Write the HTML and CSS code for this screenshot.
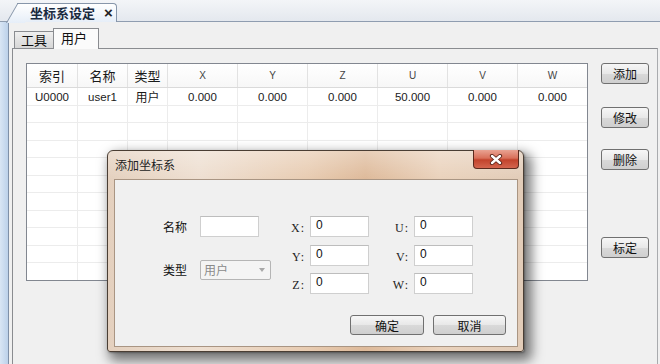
FILE: index.html
```html
<!DOCTYPE html>
<html>
<head>
<meta charset="utf-8">
<link rel="stylesheet" href="styles.css">
</head>
<body>
<div class="app">
  <div class="doctabs">
    <div class="doctab"><span class="doctab-title">坐标系设定</span><span class="doctab-close">×</span></div>
  </div>
  <div class="frame">
    <div class="rail"></div>
    <div class="work">
      <div class="subtabs">
        <div class="subtab">工具</div>
        <div class="subtab active">用户</div>
      </div>
      <div class="panel">
        <div class="grid">
          <div class="grow head">
            <div class="cell cjk">索引</div><div class="cell cjk">名称</div><div class="cell cjk">类型</div>
            <div class="cell ax">X</div><div class="cell ax">Y</div><div class="cell ax">Z</div>
            <div class="cell ax">U</div><div class="cell ax">V</div><div class="cell ax">W</div>
          </div>
          <div class="grow">
            <div class="cell">U0000</div><div class="cell">user1</div><div class="cell cjk">用户</div>
            <div class="cell">0.000</div><div class="cell">0.000</div><div class="cell">0.000</div>
            <div class="cell">50.000</div><div class="cell">0.000</div><div class="cell">0.000</div>
          </div>
          <div class="grow"><div class="cell"></div><div class="cell"></div><div class="cell"></div><div class="cell"></div><div class="cell"></div><div class="cell"></div><div class="cell"></div><div class="cell"></div><div class="cell"></div></div>
          <div class="grow"><div class="cell"></div><div class="cell"></div><div class="cell"></div><div class="cell"></div><div class="cell"></div><div class="cell"></div><div class="cell"></div><div class="cell"></div><div class="cell"></div></div>
          <div class="grow"><div class="cell"></div><div class="cell"></div><div class="cell"></div><div class="cell"></div><div class="cell"></div><div class="cell"></div><div class="cell"></div><div class="cell"></div><div class="cell"></div></div>
          <div class="grow"><div class="cell"></div><div class="cell"></div><div class="cell"></div><div class="cell"></div><div class="cell"></div><div class="cell"></div><div class="cell"></div><div class="cell"></div><div class="cell"></div></div>
          <div class="grow"><div class="cell"></div><div class="cell"></div><div class="cell"></div><div class="cell"></div><div class="cell"></div><div class="cell"></div><div class="cell"></div><div class="cell"></div><div class="cell"></div></div>
          <div class="grow"><div class="cell"></div><div class="cell"></div><div class="cell"></div><div class="cell"></div><div class="cell"></div><div class="cell"></div><div class="cell"></div><div class="cell"></div><div class="cell"></div></div>
          <div class="grow"><div class="cell"></div><div class="cell"></div><div class="cell"></div><div class="cell"></div><div class="cell"></div><div class="cell"></div><div class="cell"></div><div class="cell"></div><div class="cell"></div></div>
          <div class="grow"><div class="cell"></div><div class="cell"></div><div class="cell"></div><div class="cell"></div><div class="cell"></div><div class="cell"></div><div class="cell"></div><div class="cell"></div><div class="cell"></div></div>
          <div class="grow"><div class="cell"></div><div class="cell"></div><div class="cell"></div><div class="cell"></div><div class="cell"></div><div class="cell"></div><div class="cell"></div><div class="cell"></div><div class="cell"></div></div>
          <div class="grow"><div class="cell"></div><div class="cell"></div><div class="cell"></div><div class="cell"></div><div class="cell"></div><div class="cell"></div><div class="cell"></div><div class="cell"></div><div class="cell"></div></div>
        </div>
        <div class="actions">
          <button class="btn b-add">添加</button>
          <button class="btn b-edit">修改</button>
          <button class="btn b-del">删除</button>
          <button class="btn b-cal">标定</button>
        </div>
      </div>
    </div>
  </div>

  <div class="dialog">
    <div class="dlg-title">添加坐标系</div>
    <div class="dlg-close">
      <svg width="14" height="11" viewBox="0 0 14 11">
        <path d="M3 2 L11 9 M11 2 L3 9" stroke="#5a2418" stroke-width="4.2" stroke-linecap="round"/>
        <path d="M3 2 L11 9 M11 2 L3 9" stroke="#ffffff" stroke-width="2.4" stroke-linecap="round"/>
      </svg>
    </div>
    <div class="dlg-client">
      <div class="fields">
        <div class="col-basic">
          <div class="frow"><span class="flabel">名称</span><div class="input"></div></div>
          <div class="frow type"><span class="flabel">类型</span><div class="select"><span>用户</span><span class="arrow"></span></div></div>
        </div>
        <div class="col-axis">
          <div class="arow"><span class="alabel">X:</span><div class="input">0</div></div>
          <div class="arow"><span class="alabel">Y:</span><div class="input">0</div></div>
          <div class="arow"><span class="alabel">Z:</span><div class="input">0</div></div>
        </div>
        <div class="col-axis col-right">
          <div class="arow"><span class="alabel">U:</span><div class="input">0</div></div>
          <div class="arow"><span class="alabel">V:</span><div class="input">0</div></div>
          <div class="arow"><span class="alabel">W:</span><div class="input">0</div></div>
        </div>
      </div>
      <div class="dlg-foot">
        <button class="btn b-ok">确定</button>
        <button class="btn b-cancel">取消</button>
      </div>
    </div>
  </div>
</div>
</body>
</html>
```
FILE: styles.css
```css
* { box-sizing: border-box; }
html, body { margin: 0; padding: 0; }
body {
  width: 660px;
  height: 364px;
  overflow: hidden;
  background: #f0f0f0;
  font-family: "Noto Sans CJK SC", sans-serif;
  font-size: 12px;
  color: #111;
}
.app {
  position: relative;
  width: 660px;
  height: 364px;
  overflow: hidden;
  background: #f0f0f0;
}

/* document tab strip */
.doctabs {
  height: 22px;
  display: flex;
  align-items: flex-end;
  padding-left: 17px;
  background: linear-gradient(#f3f5f8, #e4e8ee);
  border-bottom: 1px solid #8f9db0;
}
.doctab {
  position: relative;
  height: 19px;
  width: 100px;
  margin-bottom: -1px;
  display: flex;
  align-items: center;
  padding-left: 13px;
  border: 1px solid #8796aa;
  border-left: none;
  border-bottom: none;
  border-top-right-radius: 4px;
  background: linear-gradient(#ffffff, #e6eef8);
}
.doctab::before {
  content: "";
  position: absolute;
  left: -11px;
  top: -1px;
  width: 18px;
  height: 19px;
  border-left: 1px solid #8796aa;
  border-top: 1px solid #8796aa;
  background: linear-gradient(#ffffff, #e6eef8);
  transform: skewX(-30deg);
  transform-origin: bottom left;
}
.doctab-title {
  position: relative;
  font-weight: bold;
  font-size: 13px;
  line-height: 16px;
  color: #1a2a40;
}
.doctab-close {
  position: relative;
  margin-left: 9px;
  font-family: "Liberation Sans", sans-serif;
  font-weight: bold;
  font-size: 15px;
  line-height: 16px;
  color: #222;
}

/* frame */
.frame {
  display: flex;
  height: 342px;
}
.rail {
  width: 9px;
  background: linear-gradient(90deg, #d9e6f5, #bcd1ea);
  border-right: 1px solid #7f90a8;
}
.work {
  flex: 1;
  display: flex;
  flex-direction: column;
  padding-left: 3px;
  padding-right: 2px;
  background: #f0f0f0;
}
.subtabs {
  height: 26px;
  display: flex;
  align-items: flex-end;
  padding-left: 2px;
}
.subtab {
  width: 40px;
  height: 17px;
  border: 1px solid #8a8c90;
  border-bottom: none;
  background: linear-gradient(#efefef, #d6d6d6);
  font-size: 13px;
  line-height: 16px;
  text-align: center;
}
.subtab.active {
  position: relative;
  z-index: 1;
  width: 46px;
  height: 21px;
  margin-bottom: -1px;
  margin-left: -1px;
  background: #fbfbfb;
  line-height: 18px;
  padding-right: 4px;
}
.panel {
  flex: 1;
  display: flex;
  align-items: flex-start;
  padding: 14px 0 0 13px;
  border-top: 1px solid #8a8c90;
  border-left: 1px solid #8a8c90;
  border-right: 1px solid #a9abae;
  background: #f0f0f0;
}

/* table */
.grid {
  width: 562px;
  border: 1px solid #828790;
  background: #fff;
}
.grow {
  display: grid;
  grid-template-columns: 51px 50px 40px 70px 70px 70px 70px 70px 69px;
  height: 18px;
  border-bottom: 1px solid #ececec;
}
.grow:nth-child(odd) { height: 17px; }
.grow.head {
  height: 24px;
  border-bottom: 1px solid #dadada;
  background: linear-gradient(#ffffff, #f7f7f7);
}
.grow:last-child { border-bottom: none; height: 17px; }
.cell {
  border-right: 1px solid #ececec;
  display: flex;
  align-items: center;
  justify-content: center;
  font-family: "Liberation Sans", "Noto Sans CJK SC", sans-serif;
  font-size: 11.5px;
  color: #1a1a1a;
  line-height: 14px;
  overflow: hidden;
  white-space: nowrap;
}
.head .cell { border-right-color: #e2e2e2; }
.cell:last-child { border-right: none; }
.cell.cjk {
  font-family: "Noto Sans CJK SC", sans-serif;
  font-size: 12px;
}
.head .cell.cjk { font-size: 13px; }
.cell.ax {
  font-size: 10px;
  color: #444;
}

/* action buttons */
.actions {
  display: flex;
  flex-direction: column;
  margin-left: 13px;
}
.btn {
  margin: 0;
  padding: 0;
  width: 48px;
  height: 21px;
  border: 1px solid #707070;
  border-radius: 3px;
  background: linear-gradient(#f6f6f6 0%, #e8e8e8 50%, #d9d9d9 51%, #cfcfcf 100%);
  font-family: "Noto Sans CJK SC", sans-serif;
  font-size: 12px;
  line-height: 18px;
  color: #111;
}
.b-add { margin-top: 0; }
.b-edit { margin-top: 23px; }
.b-del { margin-top: 21px; }
.b-cal { margin-top: 67px; }

/* dialog */
.dialog {
  position: absolute;
  left: 107px;
  top: 150px;
  width: 417px;
  height: 202px;
  display: flex;
  flex-direction: column;
  padding: 0 5px 4px 6px;
  border: 1px solid #4a3e34;
  border-radius: 6px 6px 3px 3px;
  background:
    linear-gradient(rgba(255,255,255,0.3), rgba(255,255,255,0) 28px),
    linear-gradient(90deg, #e4d0be 0%, #eedfd1 22%, #e8ccb2 48%, #deba9a 62%, #ead2bc 80%, #e2ccb8 100%);
  box-shadow: 5px 6px 12px 3px rgba(0,0,0,0.5), 1px 1px 2px rgba(0,0,0,0.3);
}
.dlg-title {
  height: 28px;
  display: flex;
  align-items: center;
  padding-left: 1px;
  padding-bottom: 1px;
  font-size: 12px;
  color: #222;
}
.dlg-close {
  position: absolute;
  top: -1px;
  right: 4px;
  width: 46px;
  height: 19px;
  display: flex;
  align-items: center;
  justify-content: center;
  border: 1px solid #5b2a1e;
  border-top: none;
  border-radius: 0 0 4px 4px;
  background: linear-gradient(#e9a392 0%, #d9705a 45%, #c2432c 55%, #d4654e 100%);
}
.dlg-client {
  flex: 1;
  border: 1px solid #a99583;
  background: #f0f0f0;
  display: flex;
  flex-direction: column;
  padding-top: 36px;
}
.fields {
  display: flex;
  padding-left: 48px;
  height: 99px;
}
.col-basic { width: 108px; }
.frow {
  display: flex;
  align-items: center;
  height: 21px;
}
.frow.type { margin-top: 23px; height: 20px; }
.flabel {
  width: 24px;
  margin-right: 13px;
  font-size: 12px;
  line-height: 14px;
}
.input {
  width: 59px;
  height: 21px;
  border: 1px solid #cfcfcf;
  border-top-color: #bdbdbd;
  background: #fff;
  font-family: "Liberation Sans", sans-serif;
  font-size: 12px;
  line-height: 17px;
  padding-left: 5px;
  color: #111;
}
.select {
  width: 71px;
  height: 20px;
  display: flex;
  align-items: center;
  justify-content: space-between;
  padding: 0 5px 0 3px;
  border: 1px solid #b5b5b5;
  border-radius: 2px;
  background: #f4f4f4;
  color: #8a8a8a;
  font-size: 12px;
  line-height: 16px;
}
.arrow {
  width: 0;
  height: 0;
  border-left: 3px solid transparent;
  border-right: 3px solid transparent;
  border-top: 4px solid #a8a8a8;
}
.col-axis {
  margin-left: 14px;
  display: flex;
  flex-direction: column;
}
.col-right { margin-left: 20px; }
.arow {
  display: flex;
  align-items: center;
  height: 21px;
}
.arow:nth-child(2) { margin-top: 8px; }
.arow:nth-child(3) { margin-top: 7px; }
.alabel {
  width: 20px;
  margin-right: 5px;
  text-align: right;
  font-family: "Liberation Serif", serif;
  font-size: 12px;
  letter-spacing: 1px;
  color: #222;
  padding-top: 4px;
}
.dlg-foot {
  display: flex;
  justify-content: flex-end;
  gap: 9px;
  padding-right: 11px;
}
.b-ok { width: 74px; height: 20px; line-height: 17px; }
.b-cancel { width: 73px; height: 20px; line-height: 17px; }
```
